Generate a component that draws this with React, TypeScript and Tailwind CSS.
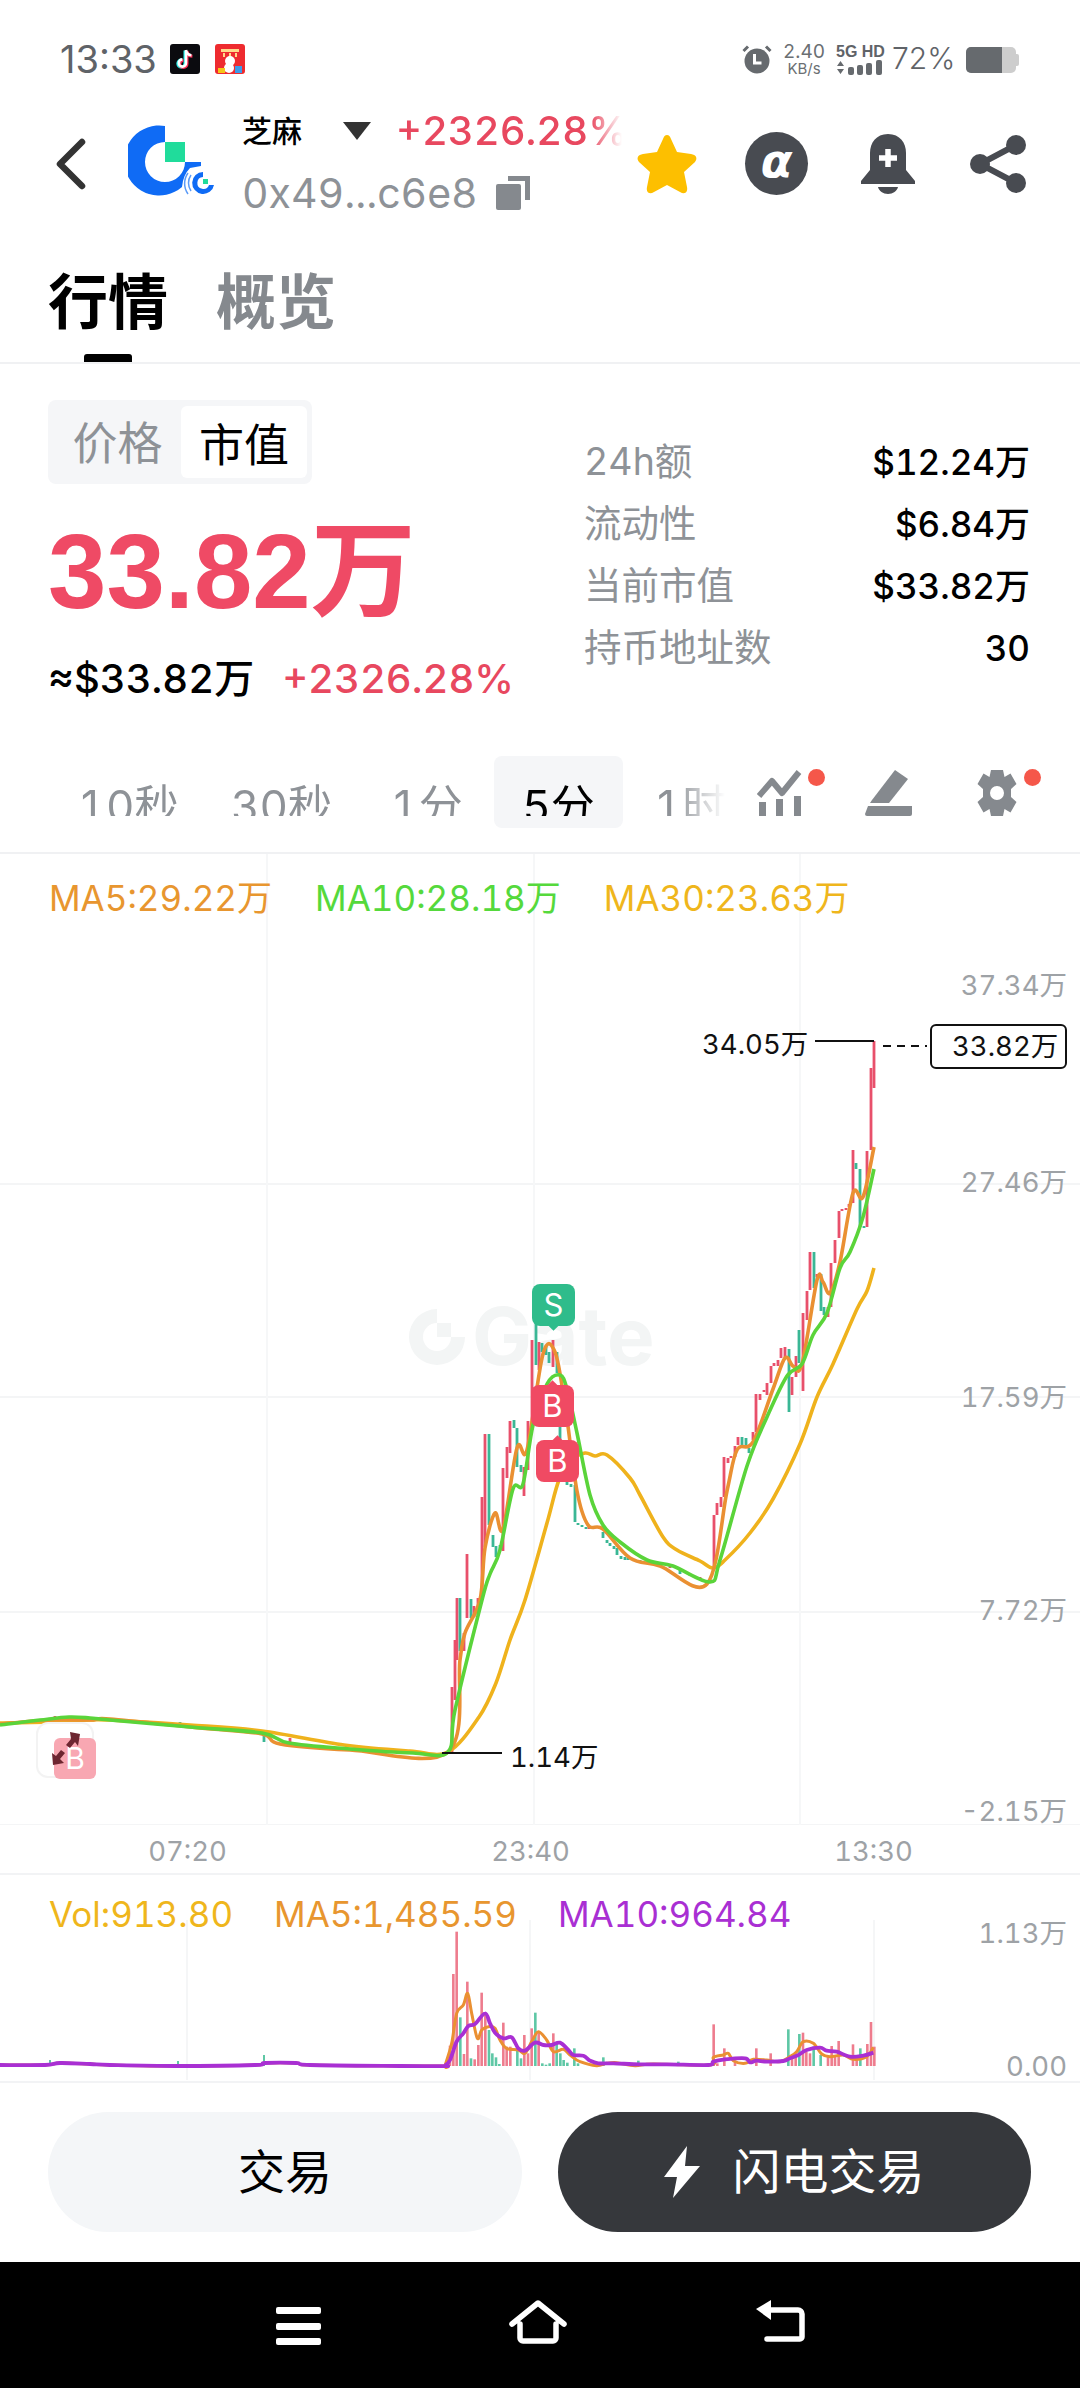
import type { ReactNode } from "react";

type Pt = [number, number];

const RED = "#e8506b";
const GREEN = "#3ab795";

// catmull-rom through traced points, keeps the MA lines from looking jagged
function smooth(pts: Pt[]) {
  let d = `M${pts[0][0]} ${pts[0][1]}`;
  for (let i = 0; i < pts.length - 1; i++) {
    const p0 = pts[i - 1] ?? pts[i];
    const p1 = pts[i];
    const p2 = pts[i + 1];
    const p3 = pts[i + 2] ?? p2;
    const c1x = p1[0] + (p2[0] - p0[0]) / 6;
    const c1y = p1[1] + (p2[1] - p0[1]) / 6;
    const c2x = p2[0] - (p3[0] - p1[0]) / 6;
    const c2y = p2[1] - (p3[1] - p1[1]) / 6;
    d += ` C${c1x.toFixed(1)} ${c1y.toFixed(1)} ${c2x.toFixed(1)} ${c2y.toFixed(1)} ${p2[0]} ${p2[1]}`;
  }
  return d;
}

const FLAT_HEAD: Pt[] = [[0, 1723], [50, 1722], [90, 1720], [110, 1720], [190, 1725], [262, 1731]];

const MA30: Pt[] = [
  ...FLAT_HEAD, [344, 1745], [410, 1751], [448, 1752], [479, 1717], [496, 1683], [510, 1640], [525, 1600], [547, 1523], [559, 1480], [572, 1460],
  [585, 1453], [595, 1456], [607, 1455], [630, 1478], [640, 1495], [663, 1537], [677, 1550], [700, 1561], [713, 1568],
  [725, 1560], [750, 1533], [773, 1499], [800, 1444], [817, 1397], [833, 1364], [857, 1309], [867, 1291], [874, 1268],
];

const MA10: Pt[] = [
  [0, 1725], [40, 1720], [69, 1717], [90, 1718], [110, 1720], [190, 1727], [262, 1733], [289, 1743], [350, 1749], [413, 1753], [448, 1752], [455, 1710], [482, 1600], [490, 1574], [500, 1550], [513, 1489], [523, 1484],
  [533, 1425], [547, 1384], [560, 1375], [567, 1389], [577, 1433], [590, 1495], [603, 1525], [620, 1542], [647, 1560],
  [673, 1566], [710, 1582], [720, 1560], [747, 1466], [767, 1417], [787, 1376], [802, 1364], [813, 1335], [827, 1313],
  [840, 1268], [850, 1252], [863, 1217], [874, 1169],
];

const MA5: Pt[] = [
  [0, 1724], [50, 1720], [90, 1720], [110, 1719], [200, 1728], [262, 1734], [280, 1744], [350, 1750], [448, 1752], [460, 1660], [465, 1633], [480, 1600], [485, 1548], [495, 1513], [503, 1529], [517, 1448], [527, 1450],
  [543, 1354], [555, 1352], [565, 1405], [577, 1491], [588, 1525], [603, 1529], [630, 1558], [660, 1566], [707, 1584],
  [727, 1491], [737, 1450], [753, 1442], [773, 1389], [785, 1358], [793, 1366], [802, 1364], [817, 1280], [823, 1282],
  [830, 1293], [840, 1262], [853, 1193], [863, 1197], [874, 1147],
];

// x, top, bottom, up/down
const CANDLES: [number, number, number, "r" | "g"][] = [
  [452, 1687, 1752, "r"], [455, 1640, 1700, "r"], [457, 1598, 1660, "r"], [460, 1598, 1651, "g"], [464, 1633, 1651, "r"],
  [467, 1554, 1618, "r"], [471, 1599, 1618, "g"], [474, 1606, 1617, "r"], [478, 1598, 1615, "r"], [482, 1497, 1600, "r"],
  [485, 1434, 1547, "r"], [489, 1434, 1525, "g"], [493, 1535, 1547, "g"], [496, 1546, 1557, "g"], [500, 1545, 1550, "g"],
  [503, 1468, 1551, "r"], [507, 1447, 1478, "r"], [510, 1421, 1453, "r"], [514, 1420, 1428, "g"], [517, 1428, 1467, "g"],
  [521, 1465, 1472, "g"], [524, 1467, 1496, "r"], [528, 1421, 1470, "r"], [532, 1340, 1430, "r"], [536, 1323, 1365, "g"],
  [539, 1342, 1370, "r"], [542, 1343, 1352, "g"], [546, 1346, 1355, "g"], [549, 1352, 1363, "g"], [553, 1340, 1367, "r"],
  [557, 1352, 1373, "g"], [560, 1427, 1440, "g"], [567, 1482, 1485, "g"], [571, 1484, 1487, "g"], [575, 1485, 1522, "g"],
  [578, 1523, 1525, "g"], [582, 1525, 1527, "g"], [586, 1527, 1529, "g"], [589, 1527, 1529, "r"], [603, 1532, 1538, "g"],
  [607, 1540, 1543, "g"], [610, 1543, 1546, "g"], [614, 1546, 1549, "g"], [617, 1548, 1555, "g"], [621, 1556, 1559, "g"],
  [625, 1557, 1560, "g"], [628, 1558, 1560, "g"], [640, 1560, 1562, "g"], [650, 1561, 1563, "g"], [660, 1563, 1565, "g"],
  [670, 1566, 1568, "r"], [680, 1569, 1574, "g"], [690, 1574, 1576, "g"], [700, 1577, 1580, "r"], [707, 1580, 1584, "r"],
  [714, 1515, 1568, "r"], [717, 1503, 1515, "r"], [721, 1497, 1507, "r"], [724, 1457, 1497, "r"], [728, 1458, 1463, "r"],
  [731, 1456, 1458, "r"], [735, 1446, 1457, "r"], [738, 1437, 1445, "r"], [742, 1437, 1447, "g"], [746, 1438, 1447, "g"],
  [749, 1448, 1453, "g"], [753, 1432, 1440, "r"], [756, 1394, 1432, "r"], [760, 1394, 1400, "r"], [764, 1390, 1392, "r"],
  [767, 1383, 1395, "r"], [771, 1366, 1383, "r"], [774, 1363, 1366, "r"], [778, 1360, 1366, "r"], [781, 1348, 1358, "r"],
  [785, 1347, 1357, "r"], [789, 1349, 1412, "g"], [792, 1377, 1395, "r"], [796, 1356, 1377, "r"], [799, 1330, 1363, "g"],
  [803, 1313, 1391, "r"], [807, 1291, 1320, "r"], [810, 1252, 1290, "r"], [814, 1252, 1288, "g"], [817, 1274, 1277, "r"],
  [821, 1274, 1311, "g"], [824, 1307, 1315, "g"], [828, 1307, 1317, "r"], [831, 1263, 1307, "r"], [835, 1240, 1263, "r"],
  [839, 1211, 1238, "r"], [842, 1209, 1211, "r"], [846, 1208, 1210, "r"], [849, 1204, 1207, "r"], [853, 1150, 1203, "r"],
  [856, 1163, 1169, "g"], [860, 1169, 1227, "g"], [864, 1226, 1228, "g"], [867, 1151, 1227, "r"], [871, 1068, 1150, "r"],
  [874, 1041, 1088, "r"], [264, 1732, 1742, "g"], [180, 1722, 1726, "g"], [55, 1716, 1720, "r"], [290, 1738, 1742, "r"],
];

// traced at 3x from x=400, y=1900 of the page
const VOL_BARS: [number, number, "r" | "g"][] = [
  [150, 437, "r"], [160, 222, "r"], [170, 95, "r"], [181, 352, "g"], [192, 462, "r"], [202, 245, "r"], [213, 475, "g"],
  [224, 478, "r"], [235, 435, "r"], [245, 278, "r"], [256, 345, "r"], [267, 390, "g"], [277, 460, "g"], [288, 472, "g"],
  [298, 492, "g"], [310, 368, "r"], [320, 440, "r"], [331, 440, "r"], [352, 445, "g"], [363, 475, "g"], [373, 405, "r"],
  [384, 460, "r"], [395, 385, "r"], [406, 338, "g"], [416, 395, "r"], [427, 490, "g"], [438, 494, "g"], [449, 490, "g"],
  [460, 400, "r"], [470, 430, "g"], [481, 460, "g"], [491, 480, "g"], [502, 488, "g"], [523, 445, "g"], [534, 490, "g"],
  [610, 472, "g"], [715, 482, "g"], [835, 485, "g"], [941, 373, "r"], [952, 490, "r"], [973, 445, "r"], [1005, 485, "r"],
  [1069, 445, "r"], [1112, 460, "r"], [1165, 388, "g"], [1176, 465, "r"], [1187, 462, "r"], [1198, 402, "g"],
  [1209, 398, "r"], [1219, 455, "r"], [1230, 460, "r"], [1241, 440, "g"], [1262, 465, "g"], [1284, 470, "r"],
  [1295, 438, "r"], [1305, 470, "r"], [1316, 423, "r"], [1359, 433, "r"], [1370, 480, "r"], [1381, 445, "g"],
  [1402, 432, "r"], [1413, 366, "r"], [1423, 440, "r"],
];

const VOL_MA10: Pt[] = [
  [135, 497], [150, 480], [170, 425], [190, 400], [205, 378], [225, 372], [255, 340], [270, 370], [285, 398], [310, 415], [335, 412],
  [355, 445], [375, 452], [405, 428], [430, 435], [455, 435], [480, 428], [505, 450], [520, 465], [550, 467], [570, 482],
  [595, 490], [640, 490], [720, 493], [800, 493], [925, 495], [940, 485], [975, 478], [1035, 475], [1050, 487], [1070, 482],
  [1100, 485], [1150, 483], [1170, 475], [1195, 465], [1220, 450], [1260, 443], [1280, 452], [1310, 455], [1350, 470],
  [1390, 467], [1420, 458],
];

const VOL_MA5: Pt[] = [
  [135, 497], [155, 430], [170, 340], [190, 315], [203, 280], [215, 340], [232, 415], [245, 390], [265, 380], [285, 385], [300, 420],
  [320, 445], [355, 450], [375, 460], [395, 425], [415, 395], [440, 420], [460, 455], [490, 448], [510, 465], [540, 485],
  [590, 497], [620, 490], [650, 488], [705, 497], [760, 492], [930, 495], [940, 472], [970, 465], [985, 460], [1000, 482],
  [1035, 490], [1060, 478], [1100, 480], [1140, 485], [1170, 470], [1190, 455], [1210, 425], [1240, 430], [1265, 462],
  [1290, 470], [1330, 465], [1360, 478], [1400, 470], [1420, 442],
];

const fromTrace = (pts: Pt[]): Pt[] => pts.map(([x, y]) => [400 + x / 3, 1900 + y / 3]);

const VOL_HEAD: Pt[] = [[0, 2065], [45, 2065], [60, 2063], [90, 2064], [110, 2065], [175, 2066], [255, 2065], [265, 2063], [296, 2063], [310, 2065], [400, 2066], [445, 2066]];

const STATS = [
  { label: "24h额", value: "$12.24万" },
  { label: "流动性", value: "$6.84万" },
  { label: "当前市值", value: "$33.82万" },
  { label: "持币地址数", value: "30" },
];

const INTERVALS = [
  { label: "10秒", width: "w-[152px]", active: false },
  { label: "30秒", width: "w-[155px]", active: false },
  { label: "1分", width: "w-[135px]", active: false },
  { label: "5分", width: "w-[129px]", active: true },
  { label: "1时", width: "w-[134px]", active: false },
];

const PRICE_AXIS = [
  { label: "37.34万", top: "top-[114px]" },
  { label: "27.46万", top: "top-[311px]" },
  { label: "17.59万", top: "top-[526px]" },
  { label: "7.72万", top: "top-[739px]" },
  { label: "-2.15万", top: "top-[940px]" },
];

function StatusBar() {
  return (
    <div className="h-[100px] flex items-start pt-[44px] pl-[60px] text-[#5f6368]">
      <span className="text-[38px] leading-[30px] w-[110px] [font-variant-numeric:normal]">13:33</span>
      <svg width="30" height="30" viewBox="0 0 30 30">
        <rect width="30" height="30" rx="3" fill="#0b0b0f" />
        <path d="M16 6v13a3.6 3.6 0 1 1-3.6-3.6M16 6c.4 3 2.4 5 5.4 5.2" fill="none" stroke="#25f4ee" strokeWidth="3" transform="translate(-1 .6)" />
        <path d="M16 6v13a3.6 3.6 0 1 1-3.6-3.6M16 6c.4 3 2.4 5 5.4 5.2" fill="none" stroke="#fe2c55" strokeWidth="3" transform="translate(1 1)" />
        <path d="M16 6v13a3.6 3.6 0 1 1-3.6-3.6M16 6c.4 3 2.4 5 5.4 5.2" fill="none" stroke="#fff" strokeWidth="2.6" />
      </svg>
      <svg className="ml-[15px]" width="30" height="30" viewBox="0 0 30 30">
        <rect width="30" height="30" rx="3" fill="#ee2b2f" />
        <path d="M6 5h18v3H6zM8 9h2v4H8zM14 9h2v4h-2zM20 9h2v4h-2z" fill="#ffd98a" />
        <circle cx="15" cy="17" r="5" fill="#fff" />
        <circle cx="14" cy="24" r="5" fill="#fff" />
        <rect x="3" y="24" width="7" height="5" fill="#f5c518" />
        <rect x="20" y="22" width="7" height="7" fill="#3c9be8" />
      </svg>
      <svg className="ml-[497px]" width="30" height="30" viewBox="0 0 30 30">
        <circle cx="15" cy="17" r="12.5" fill="#666a6e" />
        <path d="M12.5 10v9h7" fill="none" stroke="#fff" strokeWidth="3" />
        <path d="M1.5 7 6 2.5M28.5 7 24 2.5" stroke="#666a6e" strokeWidth="3" />
      </svg>
      <div className="ml-[12px] w-[40px] flex flex-col items-center text-[#6b6f73] -mt-[2px]">
        <span className="text-[19px] leading-[19px]">2.40</span>
        <span className="text-[15px] leading-[15px]">KB/s</span>
      </div>
      <div className="ml-[12px] w-[50px] flex flex-col text-[#5f6368]">
        <span className="text-[16px] leading-[15px] font-bold whitespace-nowrap [font-family:'Liberation_Sans']">5G HD</span>
        <svg className="mt-[1px]" width="50" height="15" viewBox="0 0 50 15">
          <path d="M1 6 4.500 1 8 6zM1 9l3.500 5L8 9z" fill="#666a6e" />
          <rect x="12" y="7" width="6" height="8" rx="2" fill="#666a6e" />
          <rect x="21" y="5" width="6" height="10" rx="2" fill="#666a6e" />
          <rect x="30" y="3" width="6" height="12" rx="2" fill="#666a6e" />
          <rect x="40" y="0" width="6" height="15" rx="2" fill="#666a6e" />
        </svg>
      </div>
      <span className="ml-[6px] text-[30px] leading-[28px] w-[66px] whitespace-nowrap font-light [font-variant-numeric:normal]">72%</span>
      <div className="ml-[8px] mt-[3px] flex items-center">
        <div className="w-[50px] h-[26px] rounded-[5px] overflow-hidden bg-[#cdcdcd]">
          <div className="w-[36px] h-full bg-[#666a6e]" />
        </div>
        <div className="w-[3px] h-[12px] rounded-r-[2px] bg-[#cdcdcd]" />
      </div>
    </div>
  );
}

function GateLogo() {
  return (
    <svg width="90" height="76" viewBox="0 0 90 76">
      {/* main mark, page x 128-200 y 125-197 */}
      <path d="M37 1V17A20 20 0 1 0 57 37H73V41L62 43Q55 50 54 62A35 35 0 1 1 37 1Z" fill="#0f6bf5" />
      <rect x="37" y="17" width="20" height="20" fill="#20dc9b" />
      <path d="M75 47A11 11 0 1 0 86 60H81A6 6 0 1 1 75 52Z" fill="#0f6bf5" />
      <rect x="75" y="54" width="5" height="5" fill="#20dc9b" />
      <path d="M63 50a14 14 0 0 0 0 16M60 48a18 18 0 0 0 0 21" fill="none" stroke="#5b9bf8" strokeWidth="1.500" />
    </svg>
  );
}

function Header() {
  return (
    <div className="h-[128px] flex items-center text-[#484b51]">
      <svg className="ml-[52px]" width="38" height="52" viewBox="0 0 38 52">
        <path d="M30 4 8 26l22 22" fill="none" stroke="#333" strokeWidth="6.500" strokeLinecap="round" strokeLinejoin="round" />
      </svg>
      <div className="ml-[38px] -mt-[2px] w-[90px]">
        <GateLogo />
      </div>
      <div className="ml-[24px] w-[392px] flex flex-col">
        <div className="h-[40px] flex items-center">
          <span className="text-[30px] leading-[34px] w-[100px] text-black font-medium">芝麻</span>
          <svg width="30" height="20" viewBox="0 0 30 20">
            <path d="M1 1h28L15 19z" fill="#333" />
          </svg>
          <span className="ml-[24px] w-[226px] overflow-hidden whitespace-nowrap text-[40px] leading-[42px] font-medium text-[#e8485f] [mask-image:linear-gradient(to_right,#000_86%,transparent)]">
            +2326.28%
          </span>
        </div>
        <div className="mt-[19px] h-[46px] flex items-center">
          <span className="text-[41px] leading-[46px] text-[#8e9297]">0x49...c6e8</span>
          <svg className="ml-[18px]" width="34" height="34" viewBox="0 0 34 34">
            <path d="M12 0h22v24h-5V5H12z" fill="#85898e" />
            <rect x="0" y="8" width="25" height="26" rx="2" fill="#85898e" />
          </svg>
        </div>
      </div>
      <svg width="66" height="62" viewBox="0 0 64 62">
        <path d="M32 2c2 0 3 1.500 4 4l6 13 14 2c5 .7 7 4 4 8L49 39l3 15c1 5-2 8-7 5L32 52l-13 7c-5 3-8 0-7-5l3-15L4 29c-3-4-1-7.300 4-8l14-2 6-13c1-2.500 2-4 4-4z" fill="#fdbf00" />
      </svg>
      <div className="ml-[45px] w-[63px] h-[63px] rounded-full bg-[#484b51] flex items-center justify-center">
        <span className="text-white italic font-bold text-[46px] leading-[46px] -mt-[5px] [font-family:'DejaVu_Sans']">α</span>
      </div>
      <svg className="ml-[53px]" width="54" height="60" viewBox="0 0 54 60">
        <path d="M27 0C15 0 9 9 9 19v17L0 47v3h54v-3l-9-11V19C45 9 39 0 27 0z" fill="#484b51" />
        <path d="M17 53h20c-1 4-5 7-10 7s-9-3-10-7z" fill="#484b51" />
        <path d="M27 15v18M18 24h18" stroke="#fff" strokeWidth="5.500" />
      </svg>
      <svg className="ml-[55px]" width="56" height="60" viewBox="0 0 56 60">
        <path d="M46 11 10 30l36 19" fill="none" stroke="#484b51" strokeWidth="6" />
        <circle cx="46" cy="11" r="10" fill="#484b51" />
        <circle cx="10" cy="30" r="10" fill="#484b51" />
        <circle cx="46" cy="49" r="10" fill="#484b51" />
      </svg>
    </div>
  );
}

function Tabs() {
  return (
    <div className="h-[136px] flex items-end gap-[48px] pl-[48px] border-b-2 border-[#f0f1f3]">
      <div className="flex flex-col items-center">
        <span className="text-[60px] leading-[60px] font-bold text-black">行情</span>
        <div className="mt-[22px] w-[48px] h-[8px] rounded-t-[3px] bg-black" />
      </div>
      <div className="flex flex-col items-center">
        <span className="text-[60px] leading-[60px] font-bold text-[#85898e]">概览</span>
        <div className="mt-[22px] h-[8px]" />
      </div>
    </div>
  );
}

function Overview() {
  return (
    <div className="h-[490px] border-b-2 border-[#f0f1f3] flex flex-col">
      <div className="h-[392px] flex">
        <div className="w-[537px] pl-[48px] pt-[36px]">
          <div className="w-[264px] h-[84px] bg-[#f5f6f8] rounded-[8px] flex items-center pl-[6px] pr-[5px]">
            <span className="flex-1 mt-[4px] text-center text-[45px] leading-[72px] text-[#8e9297]">价格</span>
            <span className="w-[126px] h-[72px] text-center bg-white rounded-[6px] text-[45px] leading-[80px] text-black">市值</span>
          </div>
          <div className="mt-[33px] text-[105px] leading-[110px] font-bold text-[#ef4a65] whitespace-nowrap [font-family:'Liberation_Sans','Noto_Sans_CJK_SC',sans-serif]">
            33.82万
          </div>
          <div className="mt-[27px] flex items-center h-[50px] whitespace-nowrap">
            <span className="text-[40px] leading-[50px] text-black font-medium">≈$33.82万</span>
            <span className="ml-[28px] text-[40px] leading-[50px] font-medium text-[#e8485f]">+2326.28%</span>
          </div>
        </div>
        <div className="ml-[47px] w-[446px] pt-[67px]">
          {STATS.map((row) => (
            <div key={row.label} className="h-[62px] flex items-center justify-between">
              <span className="text-[37.500px] text-[#8e9297]">{row.label}</span>
              <span className="text-[35px] font-medium text-black">{row.value}</span>
            </div>
          ))}
        </div>
      </div>
      <div className="h-[72px] flex">
        <div className="w-[725px] pl-[52px] flex overflow-hidden [mask-image:linear-gradient(to_right,#000_93%,transparent)]">
          {INTERVALS.map((item) => (
            <div
              key={item.label}
              className={`${item.width} shrink-0 h-[72px] rounded-[8px] flex justify-center ${item.active ? "bg-[#f5f6f8] text-black" : "text-[#8e9297]"}`}
            >
              <div className="h-[60px] overflow-hidden pt-[25px] text-[44px] leading-[50px] whitespace-nowrap">{item.label}</div>
            </div>
          ))}
        </div>
        <div className="relative ml-[32px] mt-[14px] w-[46px] h-[46px]">
          <svg width="46" height="46" viewBox="0 0 46 46">
            <path d="M2 26 15 11l10 12L42 2" fill="none" stroke="#85898e" strokeWidth="6" strokeLinejoin="round" />
            <path d="M2 32h7v14H2zM19 29h7v17h-7zM37 26h7v20h-7z" fill="#85898e" />
          </svg>
          <div className="absolute -top-[1px] left-[51px] w-[17px] h-[17px] rounded-full bg-[#f5574a]" />
        </div>
        <svg className="ml-[62px] mt-[14px]" width="48" height="46" viewBox="0 0 48 46">
          <path d="M30 0 43 9 24 33H5L7 30z" fill="#85898e" />
          <path d="M3 36h44v8a2 2 0 0 1-2 2H2a2 2 0 0 1-2-2z" fill="#85898e" />
        </svg>
        <div className="relative ml-[61px] mt-[14px] w-[46px] h-[46px]">
          <svg width="46" height="46" viewBox="0 0 46 46">
            <path
              fillRule="evenodd"
              d="M17 0h12l1.500 7 6-3.500 6 10.500-5.500 5v8l5.500 5-6 10.500-6-3.500L29 46H17l-1.500-7-6 3.500-6-10.500 5.500-5v-8l-5.500-5 6-10.500 6 3.500zM23 16a7 7 0 1 0 0 14 7 7 0 0 0 0-14z"
              fill="#85898e"
            />
          </svg>
          <div className="absolute -top-[1px] left-[50px] w-[17px] h-[17px] rounded-full bg-[#f5574a]" />
        </div>
      </div>
    </div>
  );
}

function Marker({ className, side, color, children }: { className: string; side: "top" | "bottom"; color: string; children: ReactNode }) {
  return (
    <div className={`absolute w-[43px] h-[42px] rounded-[8px] flex items-center justify-center text-white text-[31px] leading-none ${color} ${className}`}>
      <div className={`absolute left-[17px] w-[9px] h-[9px] rotate-45 ${color} ${side === "top" ? "-top-[3px]" : "-bottom-[3px]"}`} />
      <span className="relative">{children}</span>
    </div>
  );
}

function PriceChart() {
  return (
    <div className="relative h-[972px] overflow-hidden">
      {/* watermark */}
      <div className="absolute left-[472px] top-[453px] text-[80px] leading-[58px] font-bold text-[#f3f5f5]">Gate</div>
      <svg className="absolute inset-0" width="1080" height="972" viewBox="0 854 1080 972">
        <path d="M437 1309a28 28 0 1 0 28 28h-14a14 14 0 1 1-14-14z" fill="#f3f5f5" />
        <rect x="437" y="1323" width="14" height="14" fill="#f3f5f5" />
        {[1184, 1397, 1612, 1825].map((y) => (
          <line key={y} x1="0" x2="1080" y1={y} y2={y} stroke="#f4f5f6" strokeWidth="2" />
        ))}
        {[267, 534, 800].map((x) => (
          <line key={x} x1={x} x2={x} y1="854" y2="1825" stroke="#f6f7f8" strokeWidth="2" />
        ))}
        {CANDLES.map(([x, top, bottom, kind], i) => (
          <line key={i} x1={x} x2={x} y1={top} y2={bottom} stroke={kind === "r" ? RED : GREEN} strokeWidth="2.800" />
        ))}
        <path d={smooth(MA30)} fill="none" stroke="#efb21c" strokeWidth="3.600" />
        <path d={smooth(MA5)} fill="none" stroke="#ea9032" strokeWidth="3.600" />
        <path d={smooth(MA10)} fill="none" stroke="#5ad43a" strokeWidth="3.600" />
        {/* high / low / last callouts */}
        <path d="M815 1041h59" stroke="#111" strokeWidth="2" />
        <path d="M883 1046h44" stroke="#111" strokeWidth="2" strokeDasharray="8 6" />
        <path d="M442 1753h60" stroke="#111" strokeWidth="2" />
      </svg>

      <div className="relative pl-[49px] pt-[24px] flex gap-[43px] text-[35px] leading-[40px] whitespace-nowrap">
        <span className="text-[#e8962f]">MA5:29.22万</span>
        <span className="text-[#55d93c]">MA10:28.18万</span>
        <span className="text-[#efb61c]">MA30:23.63万</span>
      </div>

      {PRICE_AXIS.map((tick) => (
        <span key={tick.label} className={`absolute right-[13px] ${tick.top} text-[27.500px] leading-[34px] text-[#9ea2a6]`}>
          {tick.label}
        </span>
      ))}

      <span className="absolute left-[702px] top-[172px] text-[27.500px] leading-[36px] text-[#111]">34.05万</span>
      <span className="absolute left-[510px] top-[885px] text-[27.500px] leading-[36px] text-[#111]">1.14万</span>
      <div className="absolute left-[930px] top-[170px] w-[137px] h-[45px] border-2 border-[#111] rounded-[6px] bg-white pl-[20px] text-[27.500px] leading-[41px] text-[#111]">
        33.82万
      </div>

      <Marker className="left-[532px] top-[430px]" side="bottom" color="bg-[#2fbc8b]">S</Marker>
      <Marker className="left-[531px] top-[531px]" side="top" color="bg-[#f04a63]">B</Marker>
      <Marker className="left-[536px] top-[586px]" side="top" color="bg-[#f04a63]">B</Marker>

      {/* collapse-markers button, sits half transparent over the old candles */}
      <div className="absolute left-[36px] top-[868px] w-[58px] h-[56px] rounded-[12px] border-2 border-[#f3f3f3] bg-white/60" />
      <div className="absolute left-[54px] top-[884px] w-[42px] h-[41px] rounded-[6px] bg-[#f8a7b2] flex items-center justify-center text-white text-[30px] leading-none">B</div>
      <svg className="absolute left-[52px] top-[878px]" width="30" height="34" viewBox="0 0 30 34">
        <path d="M18 0l10 2-2 12-3-4-5 6-4-3 5-6zM1 33l-1-12 4 3 5-6 4 3-5 6 4 4z" fill="#6d2631" />
      </svg>
    </div>
  );
}

function TimeAxis() {
  return (
    <div className="h-[50px] flex pl-[16px] border-b-2 border-[#f2f3f5] text-[27.500px] leading-[52px] text-[#9ea2a6]">
      <span className="w-[343px] text-center">07:20</span>
      <span className="w-[343px] text-center">23:40</span>
      <span className="w-[343px] text-center">13:30</span>
    </div>
  );
}

function VolumeChart() {
  const ma10 = [...VOL_HEAD, ...fromTrace(VOL_MA10)];
  const ma5 = [...VOL_HEAD, ...fromTrace(VOL_MA5)];
  return (
    <div className="relative h-[208px] border-b-2 border-[#f2f3f5]">
      <svg className="absolute inset-0" width="1080" height="206" viewBox="0 1875 1080 206">
        {[187, 530, 874].map((x) => (
          <line key={x} x1={x} x2={x} y1="1920" y2="2080" stroke="#f2f3f4" strokeWidth="1.500" />
        ))}
        {VOL_BARS.map(([x, top, kind], i) => (
          <line
            key={i}
            x1={400 + x / 3}
            x2={400 + x / 3}
            y1={1900 + top / 3}
            y2="2066"
            stroke={kind === "r" ? "#ee7c8d" : "#5ec7a5"}
            strokeWidth="2.600"
          />
        ))}
        <path d="M50 2060v6M178 2061v5M264 2055v11" stroke="#5ec7a5" strokeWidth="2" />
        <path d={smooth(ma5)} fill="none" stroke="#ea9032" strokeWidth="3" />
        <path d={smooth(ma10)} fill="none" stroke="#a92fd3" strokeWidth="3.800" />
      </svg>
      <div className="relative pl-[49px] pt-[19px] flex gap-[41px] text-[35px] leading-[40px] whitespace-nowrap">
        <span className="text-[#efb61c]">Vol:913.80</span>
        <span className="text-[#e8962f]">MA5:1,485.59</span>
        <span className="text-[#a92fd3]">MA10:964.84</span>
      </div>
      <span className="absolute right-[13px] top-[41px] text-[27.500px] leading-[34px] text-[#9ea2a6]">1.13万</span>
      <span className="absolute right-[13px] top-[174px] text-[27.500px] leading-[34px] text-[#9ea2a6]">0.00</span>
    </div>
  );
}

function Actions() {
  return (
    <div className="h-[179px] flex gap-[36px] pl-[48px] pt-[29px]">
      <button className="w-[474px] h-[120px] rounded-full bg-[#f4f6f8] text-[47px] text-black">交易</button>
      <button className="w-[473px] h-[120px] rounded-full bg-[#36383c] flex items-center justify-center gap-[32px] text-[48px] text-white">
        <svg width="36" height="52" viewBox="0 0 36 52">
          <path d="M23 0 0 31h13L9 52l27-32H21z" fill="#fff" />
        </svg>
        闪电交易
      </button>
    </div>
  );
}

function NavBar() {
  return (
    <div className="h-[126px] bg-black flex items-start justify-center pt-[38px] gap-[188px]">
      <div className="w-[45px] h-[38px] mt-[7px] flex flex-col justify-between">
        <div className="h-[7px] rounded-[2px] bg-white" />
        <div className="h-[7px] rounded-[2px] bg-white" />
        <div className="h-[7px] rounded-[2px] bg-white" />
      </div>
      <svg width="58" height="44" viewBox="0 0 58 44">
        <path d="M3 24 29 3l26 21M11 24v14a3 3 0 0 0 3 3h30a3 3 0 0 0 3-3V24" fill="none" stroke="#fff" strokeWidth="5.500" strokeLinecap="round" strokeLinejoin="round" />
      </svg>
      <svg width="50" height="42" viewBox="0 0 50 42">
        <path d="M14 10h29a4 4 0 0 1 4 4v23a2 2 0 0 1-2 2H12" fill="none" stroke="#fff" strokeWidth="5.500" strokeLinecap="round" />
        <path d="M16 0v20L1 9z" fill="#fff" />
      </svg>
    </div>
  );
}

export default function App() {
  return (
    <div className="w-[1080px] h-[2388px] overflow-hidden bg-white flex flex-col tabular-nums [font-family:Inter,'Noto_Sans_CJK_SC',sans-serif]">
      <StatusBar />
      <Header />
      <Tabs />
      <Overview />
      <PriceChart />
      <TimeAxis />
      <VolumeChart />
      <Actions />
      <NavBar />
    </div>
  );
}
